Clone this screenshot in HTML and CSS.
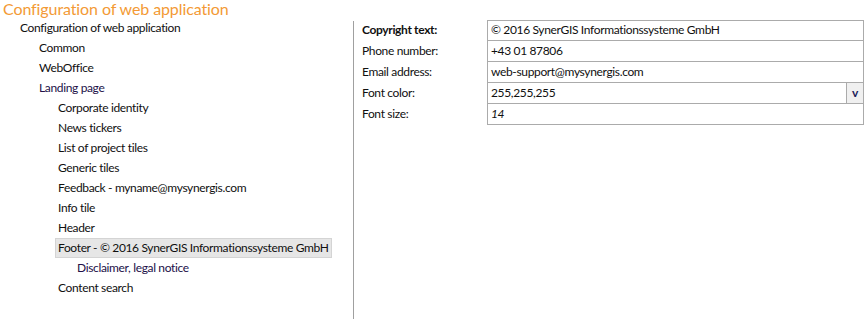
FILE: index.html
```html
<!DOCTYPE html>
<html lang="en">
<head>
<meta charset="utf-8">
<title>Configuration of web application</title>
<link rel="stylesheet" href="styles.css">
</head>
<body>
<h1 class="title">Configuration of web application</h1>
<div class="main">
  <div class="tree">
    <div class="row lvl0"><span class="item">Configuration of web application</span></div>
    <div class="row lvl1"><span class="item">Common</span></div>
    <div class="row lvl1"><span class="item">WebOffice</span></div>
    <div class="row lvl1"><span class="item visited">Landing page</span></div>
    <div class="row lvl2"><span class="item">Corporate identity</span></div>
    <div class="row lvl2"><span class="item">News tickers</span></div>
    <div class="row lvl2"><span class="item">List of project tiles</span></div>
    <div class="row lvl2"><span class="item">Generic tiles</span></div>
    <div class="row lvl2"><span class="item">Feedback - myname@mysynergis.com</span></div>
    <div class="row lvl2"><span class="item">Info tile</span></div>
    <div class="row lvl2"><span class="item">Header</span></div>
    <div class="row lvl2"><span class="item selected">Footer - © 2016 SynerGIS Informationssysteme GmbH</span></div>
    <div class="row lvl3"><span class="item visited">Disclaimer, legal notice</span></div>
    <div class="row lvl2"><span class="item">Content search</span></div>
  </div>
  <div class="divider"></div>
  <div class="props">
    <div class="label bold">Copyright text:</div>
    <div class="field first"><span class="val">© 2016 SynerGIS Informationssysteme GmbH</span></div>
    <div class="label">Phone number:</div>
    <div class="field"><span class="val">+43 01 87806</span></div>
    <div class="label">Email address:</div>
    <div class="field"><span class="val">web-support@mysynergis.com</span></div>
    <div class="label">Font color:</div>
    <div class="field"><span class="val">255,255,255</span><span class="dropbtn">v</span></div>
    <div class="label">Font size:</div>
    <div class="field"><span class="val italic">14</span></div>
  </div>
</div>
</body>
</html>
```

FILE: styles.css
```css
html, body {
  margin: 0;
  padding: 0;
  background: #ffffff;
}
body {
  font-family: Lato, "Noto Sans", sans-serif;
  font-size: 12px;
  letter-spacing: -0.35px;
  color: #101010;
  width: 867px;
  height: 319px;
  overflow: hidden;
}
.title {
  margin: 0;
  padding-left: 3px;
  height: 18px;
  font-size: 16px;
  line-height: 18px;
  letter-spacing: -0.1px;
  font-weight: normal;
  color: #f39a35;
  white-space: nowrap;
}
.main {
  display: flex;
  height: 301px;
}
.tree {
  width: 353px;
  flex: none;
}
.row {
  height: 20px;
  display: flex;
  align-items: center;
}
.lvl0 { padding-left: 17px; }
.lvl1 { padding-left: 36px; }
.lvl2 { padding-left: 55px; }
.lvl3 { padding-left: 74px; }
.item {
  display: inline-block;
  height: 17px;
  line-height: 17px;
  padding: 0 2px 1px;
  border: 1px solid transparent;
  white-space: nowrap;
}
.item.visited { color: #221048; }
.item.selected {
  background: #e6e6e6;
  border-color: #d4d4d4;
}
.divider {
  width: 1px;
  flex: none;
  margin-top: 3px;
  background: #a0a0a0;
}
.props {
  flex: 1;
  padding: 2px 3px 0 8px;
  display: grid;
  grid-template-columns: 125px 1fr;
  grid-auto-rows: 21px;
  align-content: start;
}
.label {
  line-height: 20px;
  padding-bottom: 1px;
  white-space: nowrap;
}
.label.bold { font-weight: bold; }
.field {
  display: flex;
  height: 20px;
  border: 1px solid #ababab;
  margin-top: -1px;
  box-sizing: content-box;
}
.field.first { margin-top: 0; height: 19px; }
.val {
  flex: 1;
  padding-left: 3px;
  line-height: 19px;
  white-space: nowrap;
  overflow: hidden;
}
.field.first .val { line-height: 18px; }
.italic { font-style: italic; }
.dropbtn {
  width: 16px;
  flex: none;
  border-left: 1px solid #ababab;
  background: #f0f0f0;
  font-weight: bold;
  color: #1c1c5a;
  text-align: center;
  line-height: 19px;
}
```
